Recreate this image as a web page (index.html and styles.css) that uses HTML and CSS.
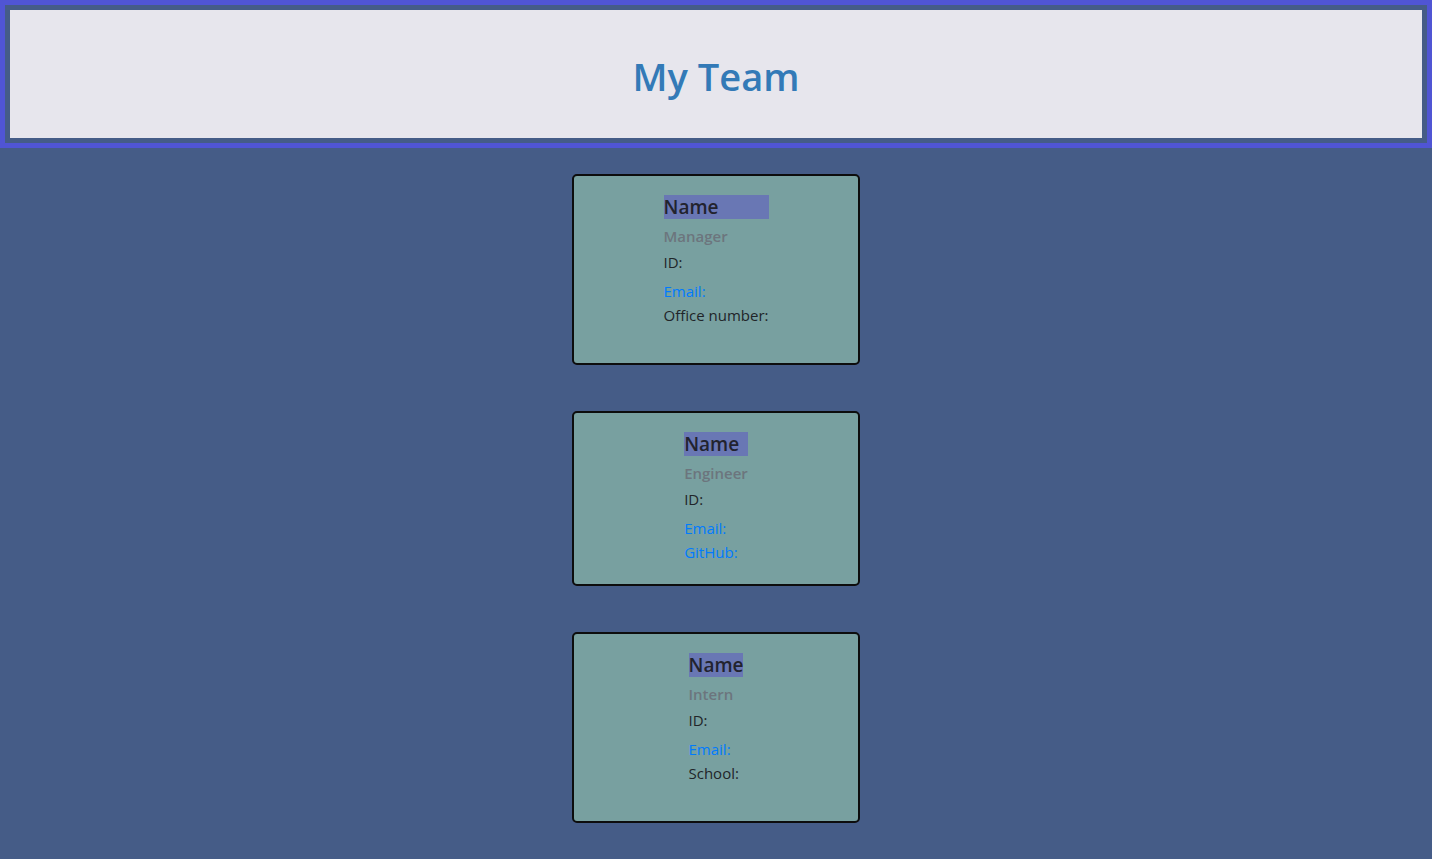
FILE: index.html
```html
<!DOCTYPE html>
<html lang="en">
<head>
<meta charset="utf-8">
<title>My Team</title>
<link rel="stylesheet" href="styles.css">
</head>
<body>
<header class="banner">
  <div class="banner-inner">
    <h1 class="banner-title">My Team</h1>
  </div>
</header>
<main class="team">
  <article class="card">
    <div class="card-body">
      <h5 class="card-name">Name</h5>
      <h6 class="card-role">Manager</h6>
      <p class="card-id">ID:</p>
      <a class="card-link card-email" href="#">Email:</a>
      <p class="card-text card-last">Office number:</p>
    </div>
  </article>
  <article class="card">
    <div class="card-body">
      <h5 class="card-name">Name</h5>
      <h6 class="card-role">Engineer</h6>
      <p class="card-id">ID:</p>
      <a class="card-link card-email" href="#">Email:</a>
      <a class="card-link" href="#">GitHub:</a>
    </div>
  </article>
  <article class="card">
    <div class="card-body">
      <h5 class="card-name">Name</h5>
      <h6 class="card-role">Intern</h6>
      <p class="card-id">ID:</p>
      <a class="card-link card-email" href="#">Email:</a>
      <p class="card-text card-last">School:</p>
    </div>
  </article>
</main>
</body>
</html>
```
FILE: styles.css
```css
html, body {
  margin: 0;
  padding: 0;
}
body {
  background: #455c87;
  font-family: "Open Sans", "Noto Sans", sans-serif;
  color: #212529;
  min-height: 859px;
}
.banner {
  border: 5px solid #5055d4;
}
.banner-inner {
  border: 5px solid #455c87;
  background: #e7e6ed;
  height: 128px;
  display: flex;
  align-items: center;
  justify-content: center;
}
.banner-title {
  margin: 0;
  font-size: 38px;
  font-weight: 600;
  color: #337ab7;
  line-height: 1.2;
  position: relative;
  top: 3px;
}
.team {
  display: flex;
  flex-direction: column;
  align-items: center;
  gap: 46px;
  padding-top: 26px;
}
.card {
  box-sizing: border-box;
  width: 288px;
  border: 2px solid #0d0d0d;
  border-radius: 5px;
  background: #78a0a0;
  padding: 19px 0 20px;
  display: flex;
  justify-content: center;
}
.card-body {
  display: flex;
  flex-direction: column;
  align-items: stretch;
}
.card-name {
  margin: 0 0 7px;
  font-size: 19px;
  line-height: 24px;
  font-weight: 600;
  background: #6977b4;
  color: #22232e;
}
.card-role {
  margin: 0 0 4px;
  font-size: 15px;
  line-height: 20px;
  font-weight: 600;
  color: #6c757d;
}
.card-id {
  margin: 0 0 5px;
  font-size: 15px;
  line-height: 24px;
}
.card-link {
  font-size: 15px;
  line-height: 24px;
  color: #007bff;
  text-decoration: none;
}
.card-text {
  margin: 0;
  font-size: 15px;
  line-height: 24px;
}
.card-last {
  margin-bottom: 16px;
}
```
